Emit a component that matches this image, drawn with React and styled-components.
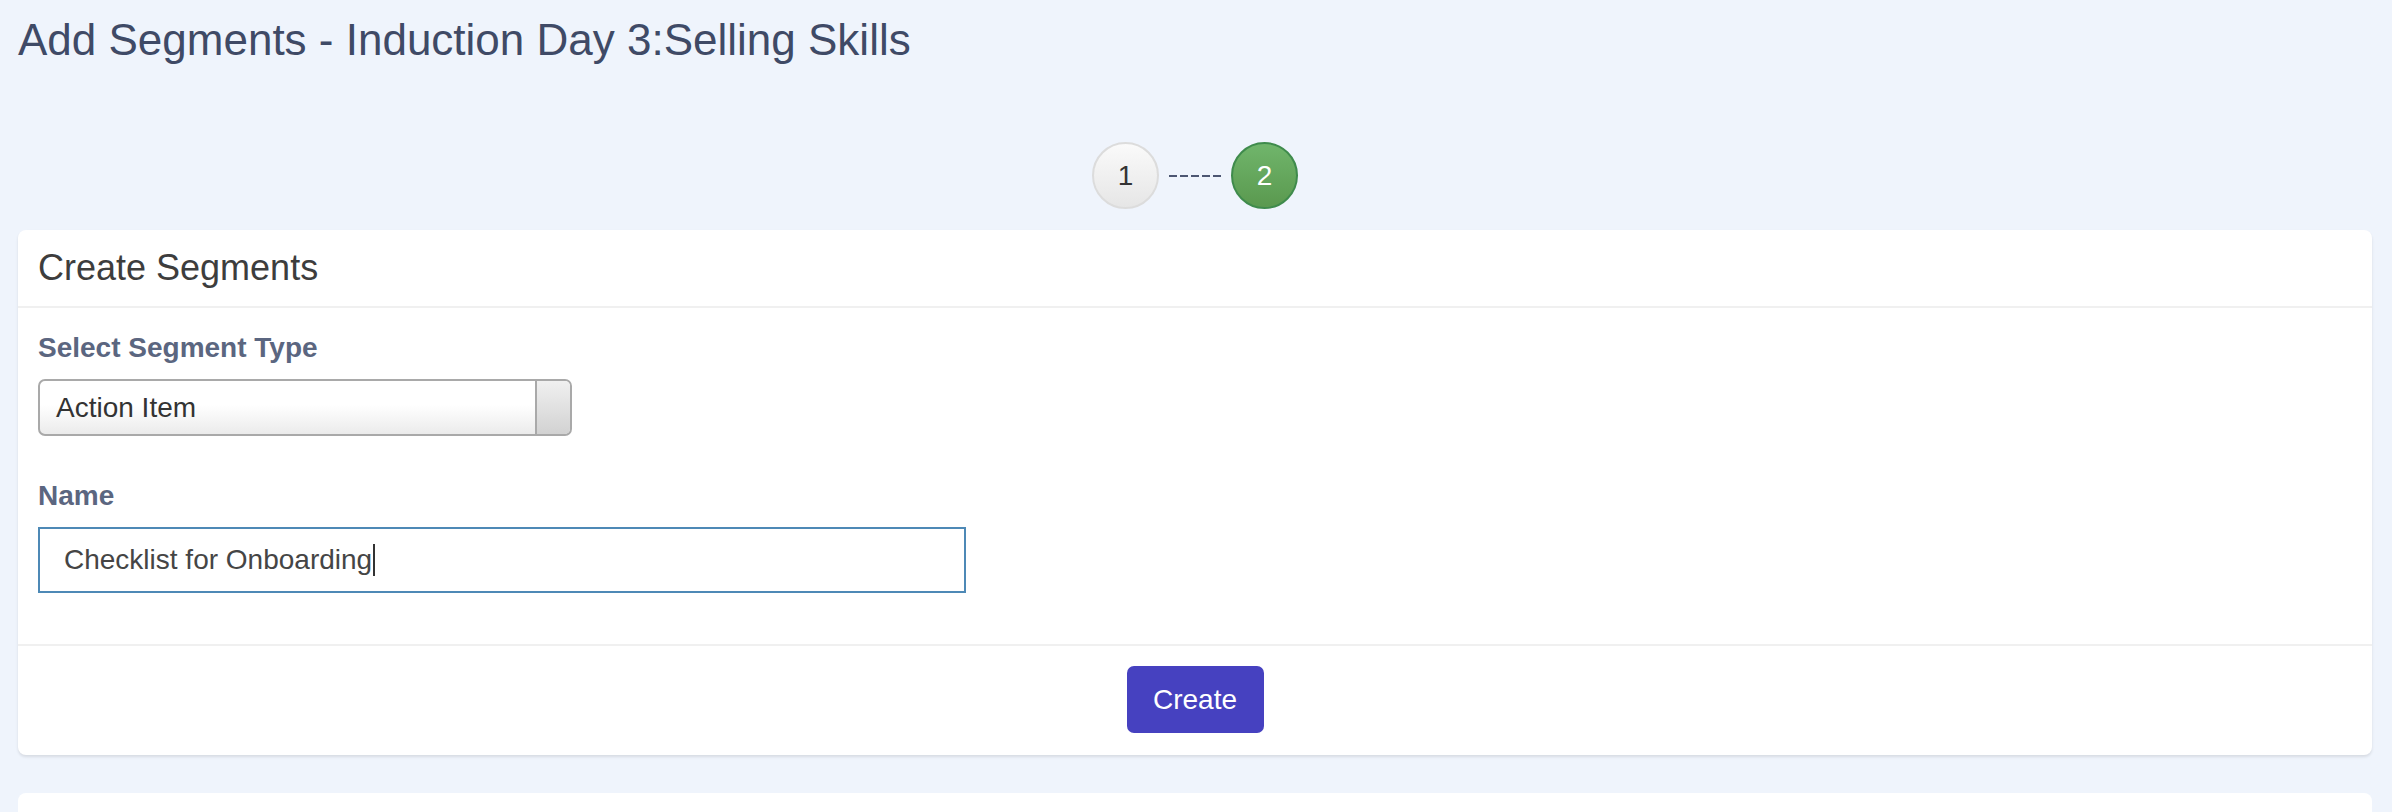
import styled, { createGlobalStyle } from 'styled-components';

const GlobalStyle = createGlobalStyle`
  html, body {
    margin: 0;
    padding: 0;
    background: #eff4fc;
    font-family: "Liberation Sans", Arial, sans-serif;
  }
`;

const Page = styled.div`
  padding: 14px 20px 0 18px;
  height: 812px;
  box-sizing: border-box;
  overflow: hidden;
`;

const Title = styled.h1`
  margin: 0;
  font-size: 44px;
  line-height: 52px;
  font-weight: normal;
  color: #3f4a66;
`;

const Steps = styled.div`
  display: flex;
  justify-content: center;
  align-items: center;
  gap: 10px;
  margin-top: 76px;
  margin-bottom: 21px;
`;

const Step = styled.div`
  width: 67px;
  height: 67px;
  box-sizing: border-box;
  border-radius: 50%;
  display: flex;
  align-items: center;
  justify-content: center;
  font-size: 28px;
  border: 2px solid ${(p) => (p.$active ? '#3f8b4c' : '#dcdcdc')};
  color: ${(p) => (p.$active ? '#ffffff' : '#333333')};
  background: ${(p) =>
    p.$active
      ? 'linear-gradient(to bottom, #70b56b, #5a994f)'
      : 'linear-gradient(to bottom, #fafafa, #e6e6e6)'};
`;

const Dashes = styled.div`
  width: 52px;
  height: 2px;
  background: repeating-linear-gradient(
    to right,
    #4c5672 0,
    #4c5672 8px,
    transparent 8px,
    transparent 11px
  );
`;

const Card = styled.div`
  background: #fff;
  border-radius: 8px;
  box-shadow: 0 2px 3px rgba(0, 0, 0, 0.1);
  margin-bottom: 38px;
`;

const CardHeader = styled.div`
  padding: 18px 20px 18px;
  font-size: 36px;
  line-height: 40px;
  color: #3d3d3d;
  border-bottom: 2px solid #f0f0f0;
`;

const CardBody = styled.div`
  padding: 24px 20px 51px;
`;

const Field = styled.div`
  display: flex;
  flex-direction: column;
  gap: 15px;
  & + & {
    margin-top: 44px;
  }
`;

const Label = styled.label`
  font-size: 28px;
  line-height: 32px;
  font-weight: bold;
  color: #5b6680;
`;

const Select = styled.div`
  width: 534px;
  height: 57px;
  box-sizing: border-box;
  border: 2px solid #a9a9a9;
  border-radius: 7px;
  display: flex;
  overflow: hidden;
  background: linear-gradient(to bottom, #ffffff 45%, #ebebeb);
`;

const SelectValue = styled.div`
  flex: 1;
  display: flex;
  align-items: center;
  padding-left: 16px;
  font-size: 28px;
  color: #333;
`;

const SelectArrow = styled.div`
  width: 33px;
  border-left: 2px solid #a9a9a9;
  background: linear-gradient(to bottom, #f0f0f0, #d2d2d2);
`;

const Input = styled.div`
  width: 928px;
  height: 66px;
  box-sizing: border-box;
  border: 2px solid #4d89b6;
  display: flex;
  align-items: center;
  padding-left: 24px;
  font-size: 28px;
  color: #454545;
`;

const Caret = styled.span`
  display: inline-block;
  width: 2px;
  height: 32px;
  background: #333;
  margin-left: 1px;
`;

const CardFooter = styled.div`
  border-top: 2px solid #f0f0f0;
  padding: 20px 0 22px;
  display: flex;
  justify-content: center;
`;

const Button = styled.button`
  width: 137px;
  height: 67px;
  border: 0;
  border-radius: 7px;
  background: #4641c0;
  color: #fff;
  font-family: "Liberation Sans", Arial, sans-serif;
  font-size: 28px;
  cursor: pointer;
`;

const NextCard = styled.div`
  background: #fff;
  border-radius: 8px 8px 0 0;
  height: 40px;
`;

function App() {
  return (
    <>
      <GlobalStyle />
      <Page>
        <Title>Add Segments - Induction Day 3:Selling Skills</Title>

        <Steps>
          <Step>1</Step>
          <Dashes />
          <Step $active>2</Step>
        </Steps>

        <Card>
          <CardHeader>Create Segments</CardHeader>
          <CardBody>
            <Field>
              <Label>Select Segment Type</Label>
              <Select>
                <SelectValue>Action Item</SelectValue>
                <SelectArrow />
              </Select>
            </Field>
            <Field>
              <Label>Name</Label>
              <Input>
                Checklist for Onboarding
                <Caret />
              </Input>
            </Field>
          </CardBody>
          <CardFooter>
            <Button>Create</Button>
          </CardFooter>
        </Card>

        <NextCard />
      </Page>
    </>
  );
}

export default App;
